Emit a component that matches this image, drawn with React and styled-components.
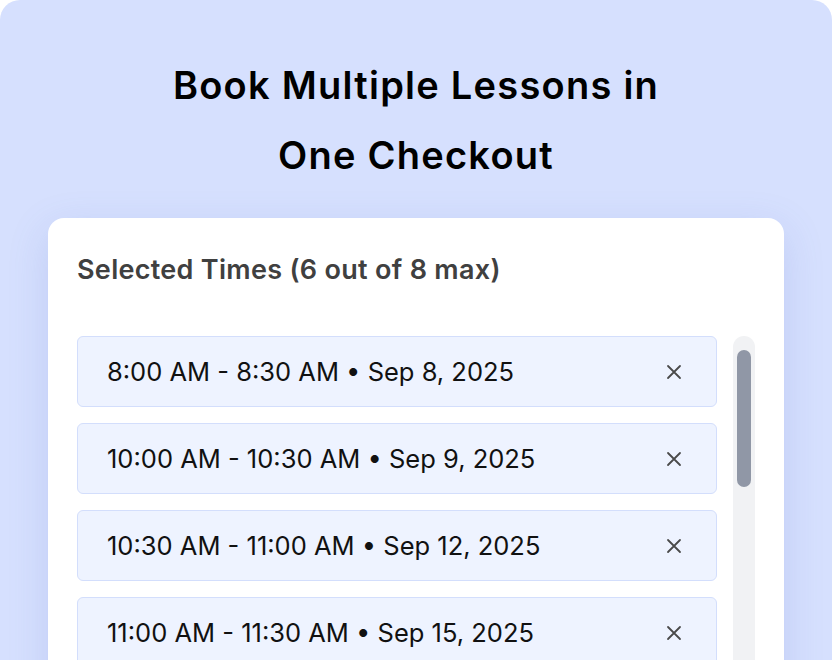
import React from "react";
import styled, { createGlobalStyle } from "styled-components";

const GlobalStyle = createGlobalStyle`
  html, body {
    margin: 0;
    padding: 0;
    background: #ffffff;
  }
  body {
    font-family: "Inter", "Noto Sans", sans-serif;
  }
  * {
    box-sizing: border-box;
  }
`;

const slots = [
  { id: 1, time: "8:00 AM - 8:30 AM", date: "Sep 8, 2025" },
  { id: 2, time: "10:00 AM - 10:30 AM", date: "Sep 9, 2025" },
  { id: 3, time: "10:30 AM - 11:00 AM", date: "Sep 12, 2025" },
  { id: 4, time: "11:00 AM - 11:30 AM", date: "Sep 15, 2025" },
  { id: 5, time: "1:00 PM - 1:30 PM", date: "Sep 18, 2025" },
  { id: 6, time: "2:30 PM - 3:00 PM", date: "Sep 22, 2025" },
];

const CloseIcon = () => (
  <svg width="16" height="16" viewBox="0 0 16 16" fill="none">
    <path d="M2 2L14 14M14 2L2 14" stroke="#4a4a4a" strokeWidth="1.8" strokeLinecap="round" />
  </svg>
);

const App = () => {
  return (
    <>
      <GlobalStyle />
      <Page>
        <Title>
          Book Multiple Lessons in
          <br />
          One Checkout
        </Title>
        <Card>
          <Heading>Selected Times (6 out of 8 max)</Heading>
          <ListArea>
            <List>
              {slots.map(({ id, time, date }) => (
                <Item key={id}>
                  <Label>
                    {time} • {date}
                  </Label>
                  <Remove aria-label="Remove">
                    <CloseIcon />
                  </Remove>
                </Item>
              ))}
            </List>
            <Track>
              <Thumb />
            </Track>
          </ListArea>
        </Card>
      </Page>
    </>
  );
};
export default App;

const Page = styled.div`
  height: 660px;
  overflow: hidden;
  background: #d6e0fe;
  border-radius: 20px 20px 0 0;
  padding: 50px 48px 0;
  display: flex;
  flex-direction: column;
`;

const Title = styled.h1`
  margin: 0;
  text-align: center;
  font-family: "Inter", sans-serif;
  font-weight: 600;
  font-size: 38px;
  line-height: 70px;
  color: #000000;
  letter-spacing: 1.25px;
`;

const Card = styled.div`
  margin-top: 28px;
  background: #ffffff;
  border-radius: 16px;
  padding: 34px 29px 0;
  flex: 1;
  box-shadow: 0 12px 40px rgba(90, 110, 200, 0.18);
`;

const Heading = styled.h2`
  margin: 0;
  font-family: "Inter", sans-serif;
  font-weight: 600;
  font-size: 27px;
  line-height: 36px;
  color: #404040;
  letter-spacing: 0.3px;
`;

const ListArea = styled.div`
  margin-top: 48px;
  display: flex;
  gap: 16px;
  align-items: stretch;
`;

const List = styled.ul`
  list-style: none;
  margin: 0;
  padding: 0;
  flex: 1;
  display: flex;
  flex-direction: column;
  gap: 16px;
`;

const Item = styled.li`
  height: 71px;
  display: flex;
  align-items: center;
  justify-content: space-between;
  padding: 0 34px 0 29px;
  background: #eef3ff;
  border: 1.5px solid #d3defc;
  border-radius: 6px;
`;

const Label = styled.span`
  font-family: "Inter", sans-serif;
  font-size: 25.5px;
  font-weight: 400;
  color: #111111;
`;

const Remove = styled.button`
  border: none;
  background: none;
  padding: 0;
  display: flex;
  cursor: pointer;
`;

const Track = styled.div`
  width: 22px;
  flex-shrink: 0;
  background: #f1f2f4;
  border-radius: 11px;
  padding: 14px 4px;
`;

const Thumb = styled.div`
  height: 137px;
  background: #9097a6;
  border-radius: 7px;
`;
